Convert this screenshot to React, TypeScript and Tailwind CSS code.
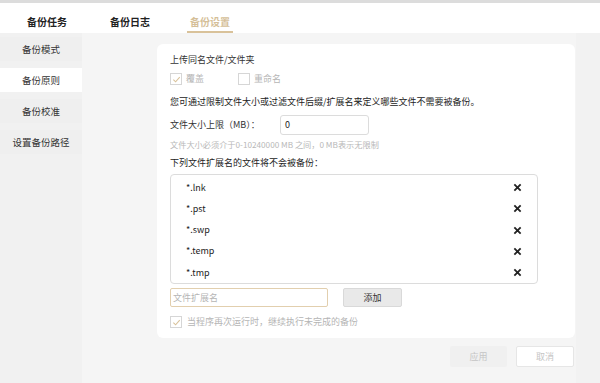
import React from 'react';

// 备份设置页面 — 顶部标签 + 左侧菜单 + 设置面板

const font = { fontFamily: '"Noto Sans CJK SC", "Noto Sans", sans-serif' };

const exts = ['*.lnk', '*.pst', '*.swp', '*.temp', '*.tmp'];
const menu = ['备份模式', '备份原则', '备份校准', '设置备份路径'];

function Check({ checked }: { checked?: boolean }) {
  return (
    <span className="w-[12px] h-[12px] border border-[#d6d6d6] bg-white flex items-center justify-center">
      {checked && (
        <svg width="9" height="9" viewBox="0 0 10 10" fill="none">
          <path d="M1.5 5.2 L4 7.6 L8.6 2.4" stroke="#d9c29a" strokeWidth="1.2" />
        </svg>
      )}
    </span>
  );
}

function XIcon() {
  return (
    <svg width="9" height="9" viewBox="0 0 10 10">
      <path d="M1.5 1.5 L8.5 8.5 M8.5 1.5 L1.5 8.5" stroke="#222" strokeWidth="2" />
    </svg>
  );
}

export default function App() {
  return (
    <div className="w-[600px] h-[383px] bg-[#f5f5f5] flex flex-col overflow-hidden" style={font}>
      {/* header */}
      <div className="h-[33px] bg-white border-t-[3px] border-[#dcdcdc] flex items-end shrink-0">
        <div className="w-[27px] shrink-0" />
        <div className="text-[10px] font-bold text-[#222] mr-[43px] pb-[4px] leading-[14px]">备份任务</div>
        <div className="text-[10px] font-bold text-[#222] mr-[40px] pb-[4px] leading-[14px]">备份日志</div>
        <div className="text-[10px] font-bold text-[#d5bf99] pb-[2px] leading-[14px] border-b-2 border-[#d9c29a] px-[3px] -ml-[3px]">
          备份设置
        </div>
      </div>

      <div className="flex flex-1">
        {/* sidebar */}
        <div className="w-[82px] bg-[#f1f1f1] flex flex-col pt-[4px] gap-[7px]">
          {menu.map((m, i) => (
            <div
              key={m}
              className={`h-[24px] flex items-center justify-center text-[9.5px] text-[#333] ${
                i === 1 ? 'bg-white' : 'bg-[#efefef]'
              }`}
            >
              {m}
            </div>
          ))}
        </div>

        {/* main */}
        <div className="flex-1 flex pl-[75px] pt-[11px]">
          <div className="w-[418px] flex flex-col">
            <div className="h-[294px] bg-white rounded-[6px] pl-[13px] pr-[37px] pt-[7px] text-[9px] text-[#333]">
              <div className="h-[18px] flex items-center">上传同名文件/文件夹</div>
              <div className="h-[18px] flex items-center text-[#b5b5b5] mt-[1px]">
                <Check checked />
                <span className="ml-[4px] mr-[34px]">覆盖</span>
                <Check />
                <span className="ml-[4px]">重命名</span>
              </div>
              <div className="h-[16px] flex items-center mt-[6px] text-[#222]">
                您可通过限制文件大小或过滤文件后缀/扩展名来定义哪些文件不需要被备份。
              </div>
              <div className="flex items-center mt-[5px]">
                <span className="w-[110px]">文件大小上限（MB）：</span>
                <div className="w-[89px] h-[20px] border border-[#dcdcdc] rounded-[3px] flex items-center px-[4px] text-[#222]">
                  0
                </div>
              </div>
              <div className="h-[14px] flex items-center mt-[2px] text-[8.2px] text-[#b8b8b8]">
                文件大小必须介于0-10240000 MB 之间，0 MB表示无限制
              </div>
              <div className="h-[16px] flex items-center mt-[4px] text-[#222]">下列文件扩展名的文件将不会被备份：</div>
              <div className="mt-[3px] h-[110px] border border-[#dcdcdc] rounded-[4px] pt-[2px] pl-[15px] pr-[15px] flex flex-col">
                {exts.map((e) => (
                  <div key={e} className="h-[21.6px] flex items-center justify-between text-[#222]">
                    <span>{e}</span>
                    <XIcon />
                  </div>
                ))}
              </div>
              <div className="flex items-center mt-[4px]">
                <div className="w-[158px] h-[19px] border border-[#e2cfae] rounded-[2px] flex items-center px-[2px] text-[#b5b5b5]">
                  文件扩展名
                </div>
                <div className="ml-[15px] w-[59px] h-[19px] bg-[#e9e9e9] border border-[#d9d9d9] rounded-[2px] flex items-center justify-center text-[#333]">
                  添加
                </div>
              </div>
              <div className="h-[18px] flex items-center mt-[6px] text-[#b5b5b5]">
                <Check checked />
                <span className="ml-[5px]">当程序再次运行时，继续执行未完成的备份</span>
              </div>
            </div>
            <div className="flex justify-end gap-[9px] mt-[8px] pr-[1px]">
              <div className="w-[57px] h-[21px] bg-[#f0f0f0] rounded-[2px] flex items-center justify-center text-[9px] text-[#c5c5c5]">
                应用
              </div>
              <div className="w-[58px] h-[21px] bg-white border border-[#e6e6e6] rounded-[2px] flex items-center justify-center text-[9px] text-[#c5c5c5]">
                取消
              </div>
            </div>
          </div>
          <div className="flex-1 bg-[#f2f2f2] ml-[1px] -mt-[11px]" />
        </div>
      </div>
    </div>
  );
}
